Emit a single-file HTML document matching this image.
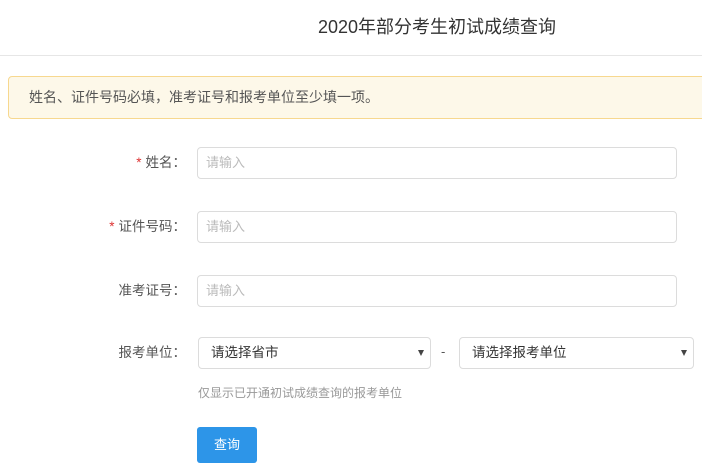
<!DOCTYPE html>
<html><head><meta charset="utf-8"><style>
body{margin:0;width:702px;height:473px;background:#fff;position:relative;overflow:hidden;font-family:"Liberation Sans","Noto Sans CJK SC",sans-serif;color:#555}
.a{position:absolute}
.t{left:0;width:874px;text-align:center;top:13px;font-size:18px;color:#333}
.hr{left:0;right:0;top:55px;height:1px;background:#e6e6e6}
.al{left:8px;width:700px;top:76px;height:43px;background:#fdf8e9;border:1px solid #f7d88f;border-radius:4px;box-sizing:border-box;font-size:14px;line-height:41px;padding-left:20px;color:#555}
.lb{right:516px;font-size:13.5px;line-height:32px;color:#555;text-align:right}
.lb b{color:#d33;font-weight:normal;margin-right:4px}
.in{left:197px;width:480px;height:32px;border:1px solid #dcdcdc;border-radius:4px;box-sizing:border-box;font-size:13px;line-height:30px;padding-left:8px;color:#bbb}
.se{height:32px;border:1px solid #dcdcdc;border-radius:4px;box-sizing:border-box;font-size:13.5px;line-height:30px;padding-left:12px;color:#333}
.se:after{content:"";position:absolute;right:6px;top:12px;border-left:3px solid transparent;border-right:3px solid transparent;border-top:6px solid #444}
</style></head><body>
<div class="a t">2020年部分考生初试成绩查询</div>
<div class="a hr"></div>
<div class="a al">姓名、证件号码必填，准考证号和报考单位至少填一项。</div>
<div class="a lb" style="top:147px"><b>*</b>姓名：</div>
<div class="a in" style="top:147px">请输入</div>
<div class="a lb" style="top:211px"><b>*</b>证件号码：</div>
<div class="a in" style="top:211px">请输入</div>
<div class="a lb" style="top:275px">准考证号：</div>
<div class="a in" style="top:275px">请输入</div>
<div class="a lb" style="top:337px">报考单位：</div>
<div class="a se" style="left:198px;width:233px;top:337px">请选择省市</div>
<div class="a" style="left:441px;top:344px;font-size:13px">-</div>
<div class="a se" style="left:459px;width:235px;top:337px">请选择报考单位</div>
<div class="a" style="left:198px;top:384px;font-size:12px;color:#999">仅显示已开通初试成绩查询的报考单位</div>
<div class="a" style="left:197px;top:427px;width:60px;height:36px;background:#2d95e8;border-radius:3px;color:#fff;font-size:13px;line-height:36px;text-align:center">查询</div>
</body></html>
